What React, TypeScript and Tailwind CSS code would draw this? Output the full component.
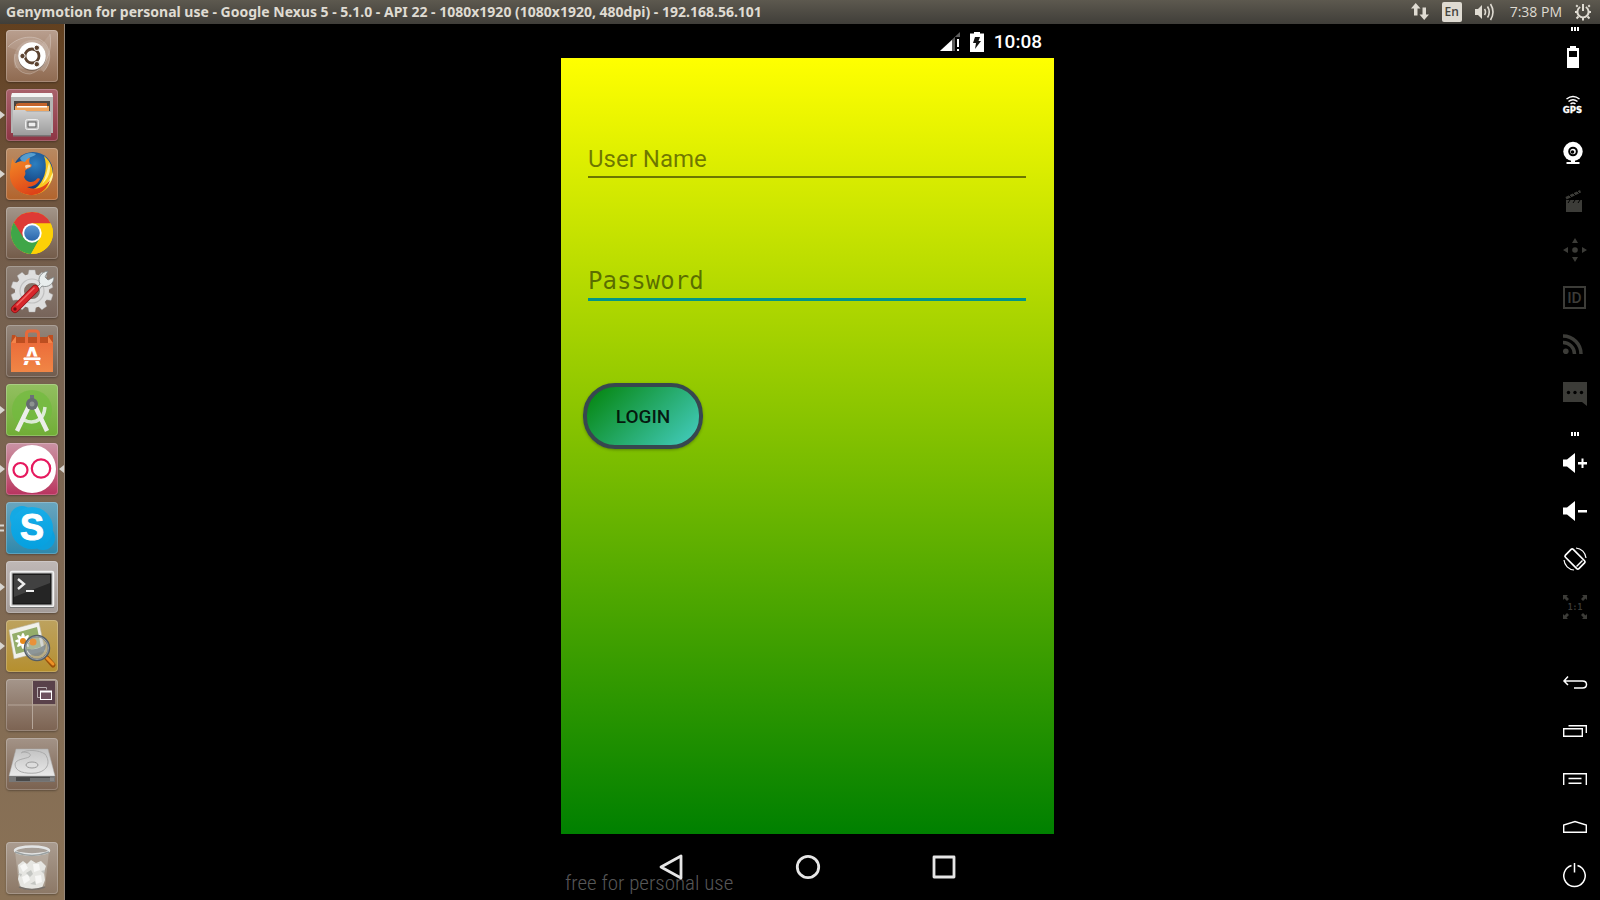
import type { ReactNode } from "react";

type LauncherItem = {
  name: string;
  tile: string;
  running?: boolean;
  windows?: boolean;
  focused?: boolean;
  art: ReactNode;
};

const gearTeeth = [0, 36, 72, 108, 144, 180, 216, 252, 288, 324];

const launcherItems: LauncherItem[] = [
  {
    name: "Search your computer",
    tile: "from-[#b99f8f] to-[#8f6a50]",
    art: (
      <>
        <path d="M9 38C3 18 20 6 34 11c12 6 12 22 4 30" fill="#fff" fillOpacity=".15" />
        <path d="M2 17C14 4 34 4 41 16c5 9 3 19-4 26L26 26z" fill="#fff" fillOpacity=".1" />
        <path d="M44 4c3 18-5 36-20 40C12 44 7 34 9 24l17 2z" fill="#fff" fillOpacity=".1" />
        <g fill="none" stroke="#fff" strokeOpacity=".25" strokeWidth="1">
          <path d="M2 17C14 4 34 4 41 16c5 9 3 19-4 26" />
          <path d="M44 4c3 18-5 36-20 40C12 44 7 34 9 24" />
        </g>
        <circle cx="26" cy="27" r="14" fill="#000" fillOpacity=".25" />
        <circle cx="26" cy="26" r="13.8" fill="#fff" />
        <circle cx="26" cy="26" r="7" fill="none" stroke="#5b4230" strokeWidth="2.8" />
        <g fill="#5b4230" stroke="#fff" strokeWidth="1">
          <circle cx="16.500" cy="26" r="2.7" />
          <circle cx="30.800" cy="17.800" r="2.7" />
          <circle cx="30.800" cy="34.200" r="2.7" />
        </g>
      </>
    ),
  },
  {
    name: "Files",
    tile: "from-[#a8616b] to-[#8d3444]",
    running: true,
    art: (
      <>
        <path d="M6 4h40l1 4v36H5V8z" fill="#b4b4b4" />
        <path d="M6 4h40l1 4H5z" fill="#f4f4f4" />
        <path d="M8 12h36v10H8z" fill="#4a4440" />
        <path d="M10 15l3-1h28v8H10z" fill="#c4622a" />
        <path d="M9 17h34v5H9z" fill="#f0a45c" />
        <path d="M11 17h30v1.5H11z" fill="#fff" />
        <path d="M7 21h12l2 2h24v24H7z" fill="url(#steel)" />
        <path d="M7 46h38v1.5H7z" fill="#777" />
        <rect x="19.500" y="30.500" width="13" height="10" rx="2" fill="#c4c4c4" stroke="#eee" />
        <rect x="22" y="33" width="8" height="5" fill="#eee" stroke="#555" />
      </>
    ),
  },
  {
    name: "Firefox",
    tile: "from-[#b98a62] to-[#b2642c]",
    running: true,
    art: (
      <>
        <circle cx="27" cy="24" r="20" fill="url(#globe)" />
        <path d="M14 10c4-5 12-6 16-4-2 3-7 2-8 6-2 5-7 2-8-2z" fill="#7cc6ee" fillOpacity=".6" />
        <path d="M38 8c8 6 11 17 7 26C40 46 25 51 13 43c8 1 16-1 20-6 6-7 9-18 5-29z" fill="#f9c81f" />
        <path d="M43 14c3 9-1 17-7 22 4-7 5-13 7-22zM47 24c1 8-5 15-12 18 6-5 9-11 12-18z" fill="#fff3a0" />
        <path d="M7 10c0 3 1 5 3 5 3-2 7-2 9-1 1-2 3-4 5-4-1 2-1 4 0 6 2 0 2 2 1 3-3 2-5 2-6 4 1 3 0 4-1 6 2 6 9 6 12 3 1-2 3-2 4-1-2 5-7 8-13 8 9 4 18 0 23-7-3 11-14 18-25 14C8 43 1 32 5 19c0-4 1-7 2-9z" fill="url(#fox)" />
        <path d="M19 18c2-2 5-1 6 0-2 2-4 1-5 3z" fill="#f8d6b0" />
      </>
    ),
  },
  {
    name: "Google Chrome",
    tile: "from-[#a3968a] to-[#735b49]",
    art: (
      <>
        <circle cx="26" cy="26" r="21" fill="#fcd006" />
        <path d="M7.800 15.500A21 21 0 0 1 44.700 16.500H26l-9.500 15z" fill="#dd3a35" />
        <path d="M7.800 15.500A21 21 0 0 0 25 47l9-16-8-5-9 4z" fill="#3fa648" />
        <path d="M34 31L25 47a21 21 0 0 0 19.700-30.500H26z" fill="#fcd006" />
        <circle cx="26" cy="26" r="9.700" fill="#fff" />
        <circle cx="26" cy="26" r="7.800" fill="url(#chromeBlue)" />
      </>
    ),
  },
  {
    name: "System Settings",
    tile: "from-[#8e8075] to-[#77645a]",
    art: (
      <>
        <g fill="#dedede" stroke="#aaa" strokeWidth=".4">
          {gearTeeth.map((a) => (
            <path key={a} d="M22 9l1-5h6l1 5z" transform={`rotate(${a} 26 25)`} />
          ))}
        </g>
        <circle cx="26" cy="25" r="12.500" fill="none" stroke="#dedede" strokeWidth="9" />
        <circle cx="26" cy="25" r="12" fill="none" stroke="#c0c0c0" strokeWidth="1.200" />
        <path d="M27 25l7-7c-3-6 1-12 8-13l-3 6 3 3 6-3c0 7-6 11-12 9l-6 7z" fill="#e9eeee" stroke="#7b8080" strokeWidth=".8" />
        <path d="M9 43L29 23" stroke="#8e1215" strokeWidth="8" strokeLinecap="round" />
        <path d="M9 43L29 23" stroke="#d8262a" strokeWidth="6.500" strokeLinecap="round" />
        <path d="M11 39L28 22" stroke="#f16a66" strokeWidth="1.500" strokeLinecap="round" />
        <circle cx="9" cy="43" r="1.700" fill="#6d1012" />
      </>
    ),
  },
  {
    name: "Ubuntu Software Center",
    tile: "from-[#94877c] to-[#705c4e]",
    art: (
      <>
        <path d="M6 10h3l2 2h30l2-2h4v9H5z" fill="#bd4e20" />
        <path d="M5 18h42v29H5z" fill="url(#bag)" />
        <path d="M5 18l5-7v7zM47 18l-5-7v7z" fill="#f4844a" />
        <path d="M20.500 18V9q0-3 3-3h6q3 0 3 3v9" fill="none" stroke="#e8693a" strokeWidth="3" />
        <text x="26" y="40" textAnchor="middle" fontFamily="Liberation Sans, sans-serif" fontWeight="700" fontSize="25" fill="#fff">A</text>
        <rect x="17" y="32" width="18" height="3.500" rx="1.500" fill="#fff" stroke="#ee7440" strokeWidth=".8" />
      </>
    ),
  },
  {
    name: "Android Studio",
    tile: "from-[#93c060] to-[#70ad35]",
    running: true,
    art: (
      <>
        <circle cx="26" cy="26" r="20" fill="#71bb3d" fillOpacity=".7" />
        <path d="M16 35q10 6 18 0 4-3 5-12" fill="none" stroke="#dcecd6" strokeWidth="3.500" />
        <path d="M23 22L11 47M29 22l12 25" stroke="#eceeea" strokeWidth="4.500" />
        <rect x="24" y="11" width="4" height="6" fill="#6c7078" />
        <circle cx="26" cy="20" r="6" fill="#666b70" />
        <circle cx="26" cy="20" r="2.500" fill="#8d9290" />
      </>
    ),
  },
  {
    name: "Genymotion",
    tile: "from-[#c993a4] to-[#b8325f]",
    running: true,
    focused: true,
    art: (
      <>
        <circle cx="26" cy="26" r="24" fill="#fff" />
        <g fill="none" stroke="#e6195e" strokeWidth="2.200">
          <circle cx="14.500" cy="27" r="7" />
          <circle cx="35" cy="25.500" r="9.200" />
        </g>
      </>
    ),
  },
  {
    name: "Skype",
    tile: "from-[#69a6bf] to-[#2d88ab]",
    running: true,
    windows: true,
    art: (
      <>
        <circle cx="16" cy="16" r="12" fill="#14a9e4" />
        <circle cx="37" cy="36" r="12" fill="#0c9fdc" />
        <circle cx="26" cy="26" r="21" fill="url(#sky)" />
        <text x="26" y="38" textAnchor="middle" fontFamily="Liberation Sans, sans-serif" fontWeight="700" fontSize="36" fill="#fff" stroke="#fff" strokeWidth="1">S</text>
      </>
    ),
  },
  {
    name: "Terminal",
    tile: "from-[#bfb8b6] to-[#a39b98]",
    running: true,
    art: (
      <>
        <rect x="4.500" y="10.500" width="43" height="35" rx="1.500" fill="#c4c4c4" stroke="#f2f2f2" strokeWidth="1.500" />
        <path d="M4 46.500h44" stroke="#777" />
        <rect x="7" y="13" width="38" height="30" fill="#252525" stroke="#111" />
        <path d="M8 14h36v8L8 36z" fill="#fff" fillOpacity=".13" />
        <path d="M12 18l6 5-6 5" fill="none" stroke="#eee" strokeWidth="2.400" />
        <path d="M20 30h8" stroke="#eee" strokeWidth="2" />
      </>
    ),
  },
  {
    name: "Image Viewer",
    tile: "from-[#bda25e] to-[#b58f2d]",
    running: true,
    art: (
      <>
        <path d="M3 10l30-8 6 29-31 8z" fill="#f1f1ec" stroke="#b8b4a0" strokeWidth=".6" />
        <path d="M6 14l25-7 4 20-25 7z" fill="#94ad6a" />
        <g fill="#fff">
          {[0, 45, 90, 135].map((a) => (
            <ellipse key={a} cx="17" cy="21" rx="8" ry="2.200" transform={`rotate(${a} 17 21)`} />
          ))}
        </g>
        <circle cx="17" cy="21" r="3" fill="#e78a1b" />
        <path d="M40 37l7 8" stroke="#9c5209" strokeWidth="5" strokeLinecap="round" />
        <path d="M41 38l6 6" stroke="#ee9226" strokeWidth="3" strokeLinecap="round" />
        <circle cx="31" cy="28" r="12" fill="#b9bfc0" fillOpacity=".55" stroke="#555e66" strokeWidth="2.500" />
        <circle cx="31" cy="28" r="11.500" fill="none" stroke="#aab2ba" strokeWidth=".8" />
        <circle cx="27" cy="22" r="3.500" fill="#e8923a" />
        <path d="M21 29q10 2 19-5-1 13-11 12-6-1-8-7z" fill="#7c868a" fillOpacity=".8" />
      </>
    ),
  },
  {
    name: "Workspace Switcher",
    tile: "from-[#a5968b] to-[#7c6352]",
    art: (
      <>
        <path d="M27 2h22v23H27z" fill="#59414a" />
        <path d="M26.500 2v48M2 26h48" stroke="#b5a69a" strokeWidth="1" />
        <path d="M31.500 18.500v-10h9v2" fill="none" stroke="#b7adb0" />
        <path d="M31.500 18.500h3" stroke="#b7adb0" />
        <rect x="34.500" y="12.500" width="11" height="8" fill="#6d525f" stroke="#fff" />
        <path d="M34 12.500h12" stroke="#fff" strokeWidth="2" />
      </>
    ),
  },
  {
    name: "Drive",
    tile: "from-[#a39387] to-[#7a6250]",
    art: (
      <>
        <path d="M10 11h32l7 27H3z" fill="url(#disk)" stroke="#aaa" strokeWidth=".5" />
        <path d="M3 38h46v6H3z" fill="#777" />
        <path d="M10 39h34v4H10z" fill="#484848" />
        <path d="M24 40h24v3H24z" fill="#999" fillOpacity=".5" />
        <path d="M15 15c6-4 18-3 24 1 6 8 3 17-9 19-11 1-21-1-21-9 1-5 10-5 14-7 3-2 1-5-7-5" fill="none" stroke="#aaa" strokeWidth="1" />
        <ellipse cx="26" cy="27" rx="6" ry="3" fill="#ddd" stroke="#999" />
      </>
    ),
  },
];

const trash: LauncherItem = {
  name: "Trash",
  tile: "from-[#aa9c90] to-[#8c7866]",
  art: (
    <>
      <path d="M9 9l4 36q13 5 26 0l4-36z" fill="#d8d3cc" fillOpacity=".35" />
      <path d="M12 23l5-4 4 3 4-4 5 3 5-2 5 5-2 6 1 8-3 8q-10 3-21 0l-3-9 1-5z" fill="#e6e6e2" />
      <g fill="#f7f7f5">
        <path d="M14 24l5-3 3 5-5 4zM27 22l6 0 1 6-6 2zM16 35l6-3 2 6-6 4zM29 34l6-1 1 7-6 2z" />
      </g>
      <g fill="#c4c6c2">
        <path d="M20 31l5-3 2 4-3 3zM35 29l4-1-1 4zM24 42l5-3 1 4zM12 31l4 1-1 3z" />
      </g>
      <path d="M13 45q13 5 26 0" fill="none" stroke="#77706a" strokeWidth="1.500" />
      <ellipse cx="26" cy="8.500" rx="17" ry="4" fill="#a79f97" stroke="#e2e4e4" strokeWidth="2.500" />
      <path d="M9 10q17 7 34 0" fill="none" stroke="#9aa0a0" strokeWidth="1.500" />
    </>
  ),
};

function Gradients() {
  return (
    <svg className="size-0 shrink-0" aria-hidden="true">
      <defs>
        <linearGradient id="steel" x1="0" y1="0" x2="0" y2="1">
          <stop offset="0" stopColor="#cfcfcf" />
          <stop offset="1" stopColor="#9b9b9b" />
        </linearGradient>
        <radialGradient id="globe" cx=".55" cy=".3" r=".7">
          <stop offset="0" stopColor="#2c7fc0" />
          <stop offset="1" stopColor="#0e2f6c" />
        </radialGradient>
        <linearGradient id="fox" x1="0" y1="0" x2=".5" y2="1">
          <stop offset="0" stopColor="#f48a26" />
          <stop offset="1" stopColor="#dd4318" />
        </linearGradient>
        <linearGradient id="chromeBlue" x1="0" y1="0" x2="0" y2="1">
          <stop offset="0" stopColor="#5b98d2" />
          <stop offset="1" stopColor="#2a66ab" />
        </linearGradient>
        <linearGradient id="bag" x1="0" y1="0" x2="0" y2="1">
          <stop offset="0" stopColor="#ec6d3a" />
          <stop offset="1" stopColor="#f08646" />
        </linearGradient>
        <linearGradient id="sky" x1="0" y1="0" x2="0" y2="1">
          <stop offset="0" stopColor="#17ade8" />
          <stop offset="1" stopColor="#06a0df" />
        </linearGradient>
        <linearGradient id="disk" x1="0" y1="0" x2="0" y2="1">
          <stop offset="0" stopColor="#c2c2c2" />
          <stop offset="1" stopColor="#eaeaea" />
        </linearGradient>
      </defs>
    </svg>
  );
}

function LauncherTile({ item }: { item: LauncherItem }) {
  return (
    <div className="flex h-[52px] items-center">
      <svg viewBox="0 0 6 12" className="h-3 w-[6px] shrink-0" aria-hidden="true">
        {item.running && !item.windows && <path d="M0 2l5 4-5 4z" fill="#d8d5d0" />}
        {item.windows && <path d="M0 3.500h4M0 8.500h4" stroke="#d8d5d0" strokeWidth="2" />}
      </svg>
      <button
        type="button"
        aria-label={item.name}
        className={`size-[52px] shrink-0 overflow-hidden rounded-sm bg-linear-to-b shadow-[inset_0_0_0_1px_rgba(255,255,255,0.22),0_1px_2px_rgba(0,0,0,0.3)] ${item.tile}`}
      >
        <svg viewBox="0 0 52 52" className="block size-full">
          {item.art}
        </svg>
      </button>
      <svg viewBox="0 0 6 12" className="h-3 w-[6px] shrink-0" aria-hidden="true">
        {item.focused && <path d="M6 2L1 6l5 4z" fill="#d8d5d0" />}
      </svg>
    </div>
  );
}

function Launcher() {
  return (
    <nav
      aria-label="Launcher"
      className="flex w-[65px] shrink-0 flex-col justify-between border-r border-[#96887b] bg-linear-to-b from-[#62401f] via-[#75604f] via-30% to-[#8a7256] py-[6px]"
    >
      <div className="flex flex-col gap-[7px]">
        {launcherItems.map((item) => (
          <LauncherTile key={item.name} item={item} />
        ))}
      </div>
      <LauncherTile item={trash} />
    </nav>
  );
}

function TopPanel() {
  return (
    <header className="flex h-6 shrink-0 items-center justify-between bg-linear-to-b from-[#5d594f] to-[#403e39] pr-2 pl-[6px] font-['Noto_Sans',sans-serif] text-[14px] text-[#dfdbd2]">
      <h1 className="pb-[2px] font-bold whitespace-nowrap">
        Genymotion for personal use - Google Nexus 5 - 5.1.0 - API 22 - 1080x1920 (1080x1920, 480dpi) - 192.168.56.101
      </h1>
      <div className="flex items-center">
        <button type="button" aria-label="Network">
          <svg viewBox="0 0 18 18" className="size-[18px]" fill="#dfdbd2">
            <path d="M4.700 0L0 5.500h3V12.500h3.500V5.500h3zM13.200 17L18 11.500h-3v-7h-3.500v7h-3z" />
          </svg>
        </button>
        <button
          type="button"
          className="ml-[13px] h-5 w-5 rounded-xs bg-[#dfdbd2] text-center font-['Open_Sans',sans-serif] text-[12px] leading-5 font-semibold text-[#45433d]"
        >
          En
        </button>
        <button type="button" aria-label="Sound" className="ml-3">
          <svg viewBox="0 0 22 18" className="h-[18px] w-[22px]" fill="none" stroke="#dfdbd2" strokeWidth="1.600">
            <path d="M1 6h3l4-4v14l-4-4H1z" fill="#dfdbd2" stroke="none" />
            <path d="M10.500 6q2 3 0 6M13.500 3.500q3.500 5.500 0 11M16.500 1q5 8 0 16" />
          </svg>
        </button>
        <button type="button" className="ml-[14px] pb-[2px] font-['Open_Sans',sans-serif] text-[14px] whitespace-nowrap">
          7:38 PM
        </button>
        <button type="button" aria-label="Session" className="ml-3">
          <svg viewBox="0 0 18 18" className="size-[18px]" fill="none" stroke="#dfdbd2" strokeWidth="2">
            <path d="M6.200 4a5.600 5.600 0 1 0 5.600 0" />
            <path d="M9 1v7" />
            <path d="M3.700 3.700L2.200 2.200M14.300 3.700l1.500-1.500M3.500 9H1M17 9h-2.500M4.500 13.500l-2 2M13.500 13.500l2 2M9 15v2.500" />
          </svg>
        </button>
      </div>
    </header>
  );
}

function Phone() {
  return (
    <section aria-label="Device screen" className="relative flex w-[493px] flex-col">
      <div className="flex h-[34px] items-center justify-end pt-[2px] pr-3 font-[Roboto,sans-serif] text-[19px] font-medium text-white">
        <svg viewBox="0 0 20 20" className="size-5" aria-hidden="true">
          <path d="M20 0v5h-5v14H0z" fill="#5c5c5c" />
          <path d="M12 8v11H0z" fill="#fff" />
          <path d="M16 6h4v14h-4z" fill="#000" />
          <path d="M17 7h2v8h-2zM17 17h2v2h-2z" fill="#fff" />
        </svg>
        <svg viewBox="0 0 14 20" className="ml-[10px] h-5 w-[14px]" aria-hidden="true">
          <path d="M4 0h6v1.500h4V20H0V1.500h4z" fill="#fff" />
          <path d="M5 5h5L8.500 9H11l-6 8 1-6H3z" fill="#111" />
        </svg>
        <time className="ml-[10px]">10:08</time>
      </div>
      <form
        className="flex flex-1 flex-col bg-linear-to-b/srgb from-[#ffff00] to-[#008000] pt-[84px] pr-7 pl-[27px]"
        onSubmit={(e) => e.preventDefault()}
      >
        <input
          type="text"
          aria-label="User Name"
          placeholder="User Name"
          className="h-9 border-b-2 border-black/50 pb-px font-[Roboto,sans-serif] text-[24px] outline-none placeholder:text-black/50"
        />
        <input
          type="password"
          aria-label="Password"
          placeholder="Password"
          className="mt-[86px] h-[37px] border-b-3 border-[#009688] pb-px font-['DejaVu_Sans_Mono',monospace] text-[24px] outline-none placeholder:text-black/50"
        />
        <button
          type="submit"
          className="-ml-[5px] mt-[82px] h-[66px] w-[120px] rounded-[32px] border-4 border-[#37474f] bg-linear-135/srgb from-[#008000] to-[#48d1cc] bg-origin-border pt-[2px] font-[Roboto,sans-serif] text-[19px] font-medium text-black/85 shadow-[0_1px_3px_rgba(0,0,0,0.3)]"
        >
          LOGIN
        </button>
      </form>
      <div className="flex h-[66px] items-center justify-center gap-[110px]">
        <button type="button" aria-label="Back">
          <svg viewBox="0 0 26 26" className="size-[26px]" fill="none" stroke="#e6e6e6" strokeWidth="2.800" strokeLinejoin="round">
            <path d="M22 2v22L2 13z" />
          </svg>
        </button>
        <button type="button" aria-label="Home">
          <svg viewBox="0 0 26 26" className="size-[26px]" fill="none" stroke="#e6e6e6" strokeWidth="2.800">
            <circle cx="13" cy="13" r="10.700" />
          </svg>
        </button>
        <button type="button" aria-label="Overview">
          <svg viewBox="0 0 26 26" className="size-[26px]" fill="none" stroke="#e6e6e6" strokeWidth="2.800" strokeLinejoin="round">
            <rect x="3" y="3" width="20" height="20" />
          </svg>
        </button>
      </div>
      <p className="pointer-events-none absolute bottom-1 left-1 font-['Roboto_Condensed',Roboto,sans-serif] text-[21px] leading-[26px] font-light text-white/35">
        free for personal use
      </p>
    </section>
  );
}

type Tool = { name: string; dim?: boolean; art: ReactNode };

const sensors: Tool[] = [
  {
    name: "Battery",
    art: <path d="M7 1h6v2h3v20H4V3h3zM6 6v6h8V6z" fill="currentColor" fillRule="evenodd" />,
  },
  {
    name: "GPS",
    art: (
      <>
        <path d="M3.500 6q6.500-5 13 0M5.500 8.500q4.500-3.500 9 0M7.500 11q2.500-2 5 0" fill="none" stroke="currentColor" strokeWidth="1.500" />
        <text x="9.500" y="20" textAnchor="middle" fontFamily="DejaVu Sans, sans-serif" fontWeight="700" fontSize="8.500" fill="currentColor" stroke="currentColor" strokeWidth=".3">GPS</text>
      </>
    ),
  },
  {
    name: "Camera",
    art: (
      <>
        <circle cx="10" cy="10.500" r="9.700" fill="currentColor" />
        <path d="M8 19h4v2h4.500v2h-13v-2H8z" fill="currentColor" />
        <circle cx="10" cy="10.500" r="3.800" fill="currentColor" stroke="#000" strokeWidth="2" />
        <circle cx="9.500" cy="11" r="1.800" fill="#000" />
      </>
    ),
  },
  {
    name: "Video capture",
    dim: true,
    art: (
      <>
        <path d="M3 11h16v12H3z" fill="currentColor" />
        <path d="M2.500 8L17 1l1 2.500L3.500 10.500z" fill="currentColor" />
        <path d="M6 6l3 3M10 4l3 3M14 2l3 3M7 11l-2 3M12 11l-2 3M17 11l-2 3" stroke="#000" strokeWidth="1" />
      </>
    ),
  },
  {
    name: "Accelerometer",
    dim: true,
    art: (
      <>
        <circle cx="12" cy="13" r="2.800" fill="currentColor" />
        <path d="M12 1l3 5H9zM12 25l3-5H9zM0 13l5-3v6zM24 13l-5-3v6z" fill="currentColor" />
      </>
    ),
  },
  {
    name: "Identifiers",
    dim: true,
    art: (
      <>
        <rect x="1" y="2" width="21" height="21" fill="none" stroke="currentColor" strokeWidth="2" />
        <text x="11.500" y="18.300" textAnchor="middle" fontFamily="Roboto, sans-serif" fontWeight="500" fontSize="15.500" fill="currentColor">ID</text>
      </>
    ),
  },
  {
    name: "Network",
    dim: true,
    art: (
      <>
        <circle cx="2.800" cy="18.200" r="2.800" fill="currentColor" />
        <path d="M0 9.500A11.500 11.500 0 0 1 11.500 21M0 3A18 18 0 0 1 18 21" fill="none" stroke="currentColor" strokeWidth="3.500" />
      </>
    ),
  },
  {
    name: "Phone",
    dim: true,
    art: (
      <>
        <path d="M0 1h24v24l-5-4H0z" fill="currentColor" />
        <g fill="#000">
          <circle cx="5.500" cy="11.500" r="1.700" />
          <circle cx="12" cy="11.500" r="1.700" />
          <circle cx="18.500" cy="11.500" r="1.700" />
        </g>
      </>
    ),
  },
];

const controls: Tool[] = [
  { name: "Volume up", art: <path d="M0 8.500h4l8-6.500v20l-8-6.500H0zM15 11h3.500V7.500h2V11H24v2.500h-3.500V17h-2v-3.500H15z" fill="currentColor" /> },
  { name: "Volume down", art: <path d="M0 8.500h4l8-6.500v20l-8-6.500H0zM15 11h9v2.500h-9z" fill="currentColor" /> },
  {
    name: "Rotate screen",
    art: (
      <g fill="none" stroke="currentColor">
        <rect x="6.500" y="2.500" width="11" height="19" rx="1.500" strokeWidth="1.700" transform="rotate(-45 12 12)" />
        <path d="M13.500 19.500l6-6" strokeWidth="1.400" />
        <path d="M13 1a11 11 0 0 1 10 10M11 23A11 11 0 0 1 1 13" strokeWidth="1.200" />
      </g>
    ),
  },
  {
    name: "Pixel perfect",
    dim: true,
    art: (
      <>
        <path d="M0 0h5L3.500 1.500 6 4 4 6 1.500 3.500 0 5zM24 0h-5l1.500 1.500L18 4l2 2 2.500-2.500L24 5zM0 24h5l-1.500-1.500L6 20l-2-2-2.500 2.500L0 19zM24 24h-5l1.500-1.500L18 20l2-2 2.500 2.500L24 19z" fill="currentColor" />
        <text x="12" y="15" textAnchor="middle" fontFamily="DejaVu Sans Mono, monospace" fontWeight="700" fontSize="8" fill="currentColor">1:1</text>
      </>
    ),
  },
];

const navigation: Tool[] = [
  { name: "Back", art: <path d="M5 5.500L1 10l4 4M1 10h18.500q4 0 4 3.500t-4 3.500H11" fill="none" stroke="currentColor" strokeWidth="1.500" /> },
  { name: "Recent apps", art: <path d="M.7 9.700h18.600v7.600H.7zM5.500 6.700h17.800V14" fill="none" stroke="currentColor" strokeWidth="1.400" /> },
  { name: "Menu", art: <path d="M.7 18V6.700h22.600V18M5.500 11.500h13M5.500 16.200h13" fill="none" stroke="currentColor" strokeWidth="1.400" /> },
  { name: "Home", art: <path d="M.7 17.300V10L12 6.500 23.300 10v7.300z" fill="none" stroke="currentColor" strokeWidth="1.400" /> },
  { name: "Power", art: <path d="M8.500 2.500a10.700 10.700 0 1 0 6 0M11.500 0v9.500" fill="none" stroke="currentColor" strokeWidth="1.500" /> },
];

function ToolGroup({ tools }: { tools: Tool[] }) {
  return (
    <div className="flex flex-col">
      {tools.map((tool) => (
        <button
          key={tool.name}
          type="button"
          aria-label={tool.name}
          className={`flex h-12 items-center justify-center ${tool.dim ? "text-[#3c3c38]" : "text-white"}`}
        >
          <svg viewBox="0 0 24 24" className="size-6 overflow-visible">
            {tool.art}
          </svg>
        </button>
      ))}
    </div>
  );
}

function Grip() {
  return (
    <svg viewBox="0 0 8 4" className="h-1 w-2" aria-hidden="true">
      <path d="M0 0h2v4H0zM3 0h2v4H3zM6 0h2v4H6z" fill="#fff" />
    </svg>
  );
}

function DeviceToolbar() {
  return (
    <aside aria-label="Device tools" className="flex w-[50px] shrink-0 flex-col justify-between pb-px">
      <div className="flex flex-col">
        <div className="flex h-[9px] items-center justify-center">
          <Grip />
        </div>
        <ToolGroup tools={sensors} />
        <div className="flex h-[22px] items-end justify-center pb-[3px]">
          <Grip />
        </div>
        <ToolGroup tools={controls} />
      </div>
      <ToolGroup tools={navigation} />
    </aside>
  );
}

export default function App() {
  return (
    <div className="flex min-h-screen flex-col bg-black">
      <Gradients />
      <TopPanel />
      <div className="flex flex-1">
        <Launcher />
        <main className="flex flex-1 justify-center">
          <Phone />
        </main>
        <DeviceToolbar />
      </div>
    </div>
  );
}
